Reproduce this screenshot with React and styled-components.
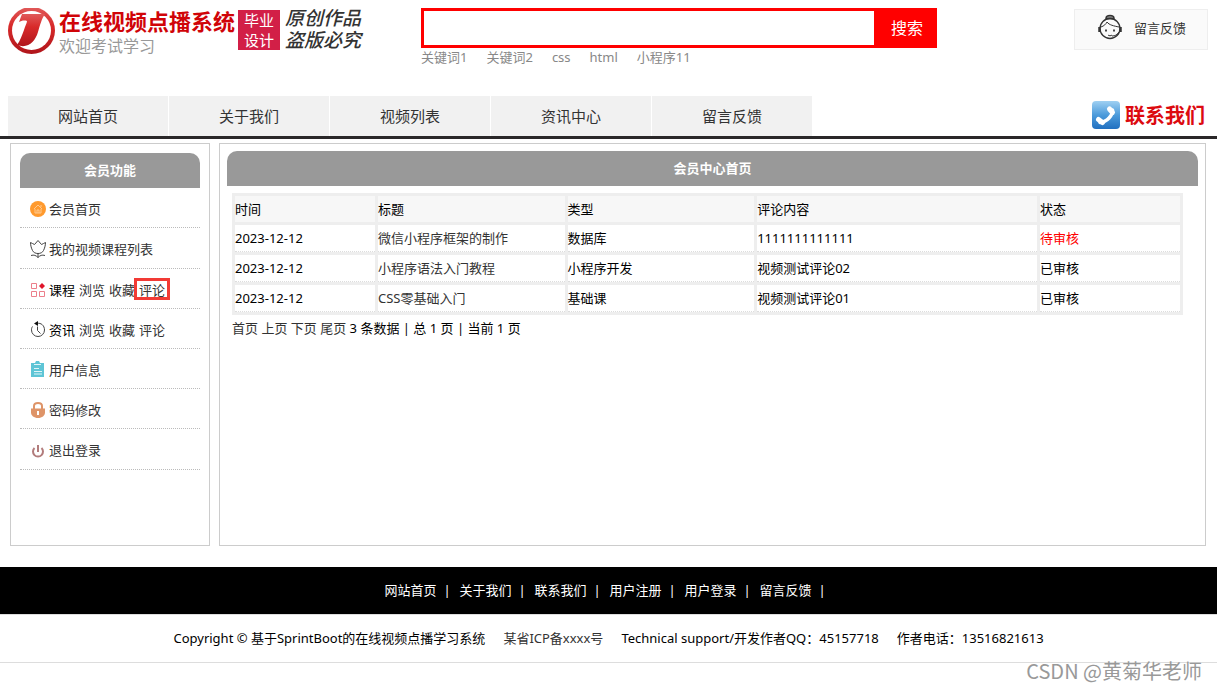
import React from "react";
import styled, { createGlobalStyle, css } from "styled-components";

const GlobalStyle = createGlobalStyle`
  *, *::before, *::after { box-sizing: border-box; }
  body {
    margin: 0;
    background: #fff;
    color: #000;
    font: 13px/18px "Noto Sans", "Noto Sans CJK SC", sans-serif;
  }
  a { color: #333; text-decoration: none; }
  ul { margin: 0; padding: 0; list-style: none; }
  h1, h2, p { margin: 0; }
  svg { display: block; flex: none; }
`;

const Page = styled.div`
  position: relative;
  min-height: 100vh;
`;

/* ---------- header ---------- */

const Header = styled.header`
  display: grid;
  grid-template-columns: 413px minmax(0, 516px) 1fr;
  align-items: start;
  min-height: 96px;
  padding: 8px 9px 0 8px;
`;

const Brand = styled.a`
  display: flex;
  align-items: flex-start;
`;

const BrandText = styled.div`
  margin-left: 3px;
  width: 176px;
  white-space: nowrap;
`;

const BrandTitle = styled.h1`
  color: #d00408;
  font-size: 22px;
  line-height: 26px;
  font-weight: 700;
`;

const BrandSubtitle = styled.p`
  color: #999;
  font-size: 16px;
  line-height: 24px;
`;

const Stamp = styled.span`
  width: 42px;
  margin: 2px 0 0 3px;
  padding: 0 6px;
  background: #d21f47;
  color: #fff;
  font-size: 15px;
  line-height: 20px;
`;

const Motto = styled.span`
  width: 80px;
  margin-left: 5px;
  color: #333;
  font-family: "Liberation Sans", "Noto Sans CJK SC", sans-serif;
  font-size: 19px;
  line-height: 22px;
  font-style: italic;
  font-weight: 500;
`;

const SearchBox = styled.form`
  display: flex;
  height: 40px;
`;

const SearchInput = styled.input`
  flex: 1;
  min-width: 0;
  padding: 0 8px;
  border: 3px solid #f00;
  background: #fff;
  font: inherit;
  outline: none;
`;

const SearchButton = styled.button`
  width: 60px;
  padding: 0;
  border: 0;
  background: #f00;
  color: #fff;
  font: inherit;
  font-size: 16px;
`;

const Keywords = styled.div`
  display: flex;
  gap: 19px;

  a { color: #888; }
`;

const FeedbackLink = styled.a`
  display: flex;
  align-items: center;
  justify-self: end;
  gap: 12px;
  width: 134px;
  height: 41px;
  margin-top: 1px;
  padding: 0 0 3px 23px;
  border: 1px solid #eee;
  background: #fafafa;
`;

/* ---------- navigation ---------- */

const Nav = styled.nav`
  display: flex;
  justify-content: space-between;
  padding: 0 12px 0 8px;
  border-bottom: 3px solid #2a2829;
`;

const NavList = styled.ul`
  display: flex;
  gap: 1px;
`;

const NavLink = styled.a`
  display: block;
  width: 160px;
  background: #f1f1f1;
  font-size: 15px;
  line-height: 40px;
  text-align: center;
`;

const ContactLink = styled.a`
  display: flex;
  align-items: center;
  gap: 4px;
  color: #dc0a0f;
  font-size: 20px;
  font-weight: 700;
`;

/* ---------- content ---------- */

const Content = styled.div`
  display: grid;
  grid-template-columns: 200px minmax(0, 1fr);
  gap: 9px;
  min-height: 403px;
  margin: 4px 11px 21px 10px;
`;

const Panel = styled.section`
  padding: ${(p) => p.$pad};
  border: 1px solid #ccc;
`;

const PanelTitle = styled.h2`
  border-radius: 10px 10px 0 0;
  background: #999;
  color: #fff;
  font-size: 13px;
  line-height: 35px;
  font-weight: 700;
  text-align: center;
`;

const MenuItem = styled.li`
  display: flex;
  align-items: center;
  gap: 3px;
  padding: 11px 0 9px 10px;
  border-bottom: 1px dotted #bbb;
`;

const MenuLinks = styled.div`
  display: flex;
  gap: 4px;
`;

const MenuLink = styled.a`
  position: relative;

  ${(p) =>
    p.$marked &&
    css`
      &::after {
        content: "";
        position: absolute;
        inset: -3px -5px -1px;
        border: 3px solid #f23a35;
      }
    `}
`;

const TableWrap = styled.div`
  padding: 7px 15px 0 5px;
`;

const Table = styled.table`
  width: 100%;
  table-layout: fixed;
  border-collapse: separate;
  border-spacing: 3px;
  background: #eee;

  th {
    height: 26px;
    padding: 0;
    background: #f7f7f7;
    font-weight: 400;
    text-align: left;
  }

  td {
    height: 27px;
    padding: 0;
    border-bottom: 1px dotted #ddd;
    background: #fff;
  }
`;

const Status = styled.span`
  color: ${(p) => (p.$pending ? "#f00" : "#000")};
`;

const Pager = styled.p`
  margin-top: 4px;
`;

/* ---------- footer ---------- */

const FooterNav = styled.nav`
  display: flex;
  justify-content: center;
  padding-left: 2px;
  background: #000;
  color: #fff;
  line-height: 47px;

  a { color: #fff; }
`;

const Divider = styled.span`
  width: 7px;
  margin: 0 9px 0 7px;
  text-align: center;
`;

const Copyright = styled.div`
  display: flex;
  justify-content: center;
  gap: 18px;
  border: solid #ddd;
  border-width: 1px 0;
  line-height: 47px;
`;

const Watermark = styled.span`
  position: absolute;
  right: 15px;
  top: 659px;
  color: #999;
  font-family: "Noto Sans CJK SC", sans-serif;
  font-size: 20px;
  line-height: 24px;
`;

/* ---------- drawings ---------- */

const LogoMark = () => (
  <svg width="48" height="48" viewBox="0 0 48 48" aria-hidden="true">
    <defs>
      <linearGradient id="ring" x1="0" y1="0" x2="0" y2="1">
        <stop offset="0" stopColor="#e05a5a" />
        <stop offset="0.4" stopColor="#d82a2a" />
        <stop offset="1" stopColor="#b0151b" />
      </linearGradient>
    </defs>
    <circle cx="23.5" cy="22.500" r="23.500" fill="url(#ring)" />
    <circle cx="23.5" cy="22.500" r="19.500" fill="#fff" />
    <path d="M14 6H37C34 10 32 17 30 24C27 34 20 41 9 37C12 33 14 27 16 22C17 18 19 15 19 13C16 12 13 13 11 14Z" fill="url(#ring)" />
  </svg>
);

const AgentIcon = () => (
  <svg width="24" height="28" viewBox="0 0 24 28" fill="none" stroke="#333" aria-hidden="true">
    <path d="M8 4.500c0-4 8-4 8 0z" fill="#999" strokeWidth="1.500" />
    <circle cx="12" cy="14.500" r="10" strokeWidth="1.300" />
    <path d="M3 13c3-1 5-3 6-5 2 3 7 4 12 5" />
    <path d="M1.500 13v5M22.500 13v5" strokeWidth="2.500" />
    <path d="M21 18c-2 3-4 4-7 4" />
    <path d="M8 15.500v2M16 15.500v2" strokeWidth="1.800" />
    <path d="M10 21c1 1 3 1 4 0" />
  </svg>
);

const PhoneIcon = () => (
  <svg width="30" height="30" viewBox="0 0 30 30" aria-hidden="true">
    <defs>
      <linearGradient id="phone" x1="0" y1="0" x2="0" y2="1">
        <stop offset="0" stopColor="#9fd0f2" />
        <stop offset="0.5" stopColor="#4c9bdb" />
        <stop offset="1" stopColor="#2270c0" />
      </linearGradient>
    </defs>
    <rect x="1" y="0" width="28" height="28" rx="4" fill="url(#phone)" />
    <g fill="none" stroke="#fff" strokeLinecap="round">
      <path d="M21.500 9C22 14 16 21 9 21.500" strokeWidth="3.500" />
      <path d="M18.500 8l3 3.500M7.500 18.500l4 3" strokeWidth="5" />
    </g>
  </svg>
);

const HomeIcon = () => (
  <svg width="16" height="19" viewBox="0 -1 16 19" fill="none" aria-hidden="true">
    <circle cx="8" cy="9" r="8" fill="#ff9a2e" />
    <path d="M4 9l4-4 4 4M5 9v4h6V9M7 13v-3h2v3M11 5v2" stroke="#ffc98e" />
  </svg>
);

const TulipIcon = () => (
  <svg width="16" height="20" viewBox="0 -1 16 20" fill="none" stroke="#444" aria-hidden="true">
    <path d="M0.500 2.500c1 1 3 1 4 2L8 0.500l3.500 4c1-1 3-1 4-2 0 3-1 6-2 8-1 2-3 3-5.500 3s-4.500-1-5.500-3c-1-2-2-5-2-8z" />
    <path d="M8 13.500v4M1 15.500c3-1 5 0 7 2 2-2 4-3 7-2" />
  </svg>
);

const GridIcon = () => (
  <svg width="16" height="19" viewBox="0 -1 16 19" fill="none" stroke="#ec7f8b" aria-hidden="true">
    <path d="M1.500 2.500h5v5h-5zM1.500 10.500h5v5h-5zM9.500 10.500h5v5h-5z" />
    <path d="M12 2l3 3-3 3-3-3z" fill="#e0142a" stroke="none" />
  </svg>
);

const ClockIcon = () => (
  <svg width="16" height="19" viewBox="0 -1 16 19" fill="none" stroke="#444" aria-hidden="true">
    <path d="M7 2.500c4-1 7.500 2 7.500 6.500a6.500 6.500 0 0 1-13 0c0-1 0-2 1-3.500" />
    <path d="M7.500 5.500v4l3 3" />
    <path d="M4 2.500l4-2.500v5z" fill="#111" stroke="none" />
  </svg>
);

const ClipboardIcon = () => (
  <svg width="16" height="19" viewBox="0 -1 16 19" aria-hidden="true">
    <path d="M1 2h4l1-2h3l1 2h4v14H1z" fill="#5ec5d6" />
    <path d="M4 3.500h7M4 7.500h5M4 10.500h8M4 13h8" stroke="#dff5f8" />
  </svg>
);

const LockIcon = () => (
  <svg width="16" height="19" viewBox="0 -1 16 19" fill="none" aria-hidden="true">
    <path d="M4 8V5c0-4 8-4 8 0v3" stroke="#de9468" strokeWidth="2" />
    <path d="M1 7.500h14v4c0 3-3 5.500-7 5.500s-7-2.500-7-5.500z" fill="#de9468" />
    <path d="M8 10v4" stroke="#fff" strokeWidth="2" />
  </svg>
);

const PowerIcon = () => (
  <svg width="16" height="20" viewBox="0 -1 16 20" fill="none" stroke="#b27c7c" strokeWidth="2" aria-hidden="true">
    <path d="M4.500 7a5 5 0 1 0 7 0M8 4V11" />
  </svg>
);

/* ---------- data ---------- */

const keywords = ["关键词1", "关键词2", "css", "html", "小程序11"];
const navItems = ["网站首页", "关于我们", "视频列表", "资讯中心", "留言反馈"];
const footerItems = ["网站首页", "关于我们", "联系我们", "用户注册", "用户登录", "留言反馈"];

const menu = [
  { icon: HomeIcon, links: ["会员首页"] },
  { icon: TulipIcon, links: ["我的视频课程列表"] },
  { icon: GridIcon, label: "课程", links: ["浏览", "收藏", "评论"], marked: "评论" },
  { icon: ClockIcon, label: "资讯", links: ["浏览", "收藏", "评论"] },
  { icon: ClipboardIcon, links: ["用户信息"] },
  { icon: LockIcon, links: ["密码修改"] },
  { icon: PowerIcon, links: ["退出登录"] },
];

const columns = [
  ["时间", "15%"],
  ["标题", "20%"],
  ["类型", "20%"],
  ["评论内容", "30%"],
  ["状态", "15%"],
];

const comments = [
  ["2023-12-12", "微信小程序框架的制作", "数据库", "1111111111111", "待审核"],
  ["2023-12-12", "小程序语法入门教程", "小程序开发", "视频测试评论02", "已审核"],
  ["2023-12-12", "CSS零基础入门", "基础课", "视频测试评论01", "已审核"],
];

export default function App() {
  return (
    <Page lang="zh-CN">
      <GlobalStyle />
      <Header>
        <Brand href="#">
          <LogoMark />
          <BrandText>
            <BrandTitle>在线视频点播系统</BrandTitle>
            <BrandSubtitle>欢迎考试学习</BrandSubtitle>
          </BrandText>
          <Stamp>毕业<br />设计</Stamp>
          <Motto>原创作品<br />盗版必究</Motto>
        </Brand>
        <div>
          <SearchBox onSubmit={(e) => e.preventDefault()}>
            <SearchInput type="text" aria-label="搜索" />
            <SearchButton type="submit">搜索</SearchButton>
          </SearchBox>
          <Keywords>
            {keywords.map((k) => <a href="#" key={k}>{k}</a>)}
          </Keywords>
        </div>
        <FeedbackLink href="#">
          <AgentIcon />
          留言反馈
        </FeedbackLink>
      </Header>

      <Nav>
        <NavList>
          {navItems.map((n) => (
            <li key={n}><NavLink href="#">{n}</NavLink></li>
          ))}
        </NavList>
        <ContactLink href="#">
          <PhoneIcon />
          联系我们
        </ContactLink>
      </Nav>

      <Content>
        <Panel $pad="9px">
          <PanelTitle>会员功能</PanelTitle>
          <ul>
            {menu.map(({ icon: Icon, label, links, marked }) => (
              <MenuItem key={label || links[0]}>
                <Icon />
                <MenuLinks>
                  {label && <span>{label}</span>}
                  {links.map((l) => (
                    <MenuLink href="#" key={l} $marked={l === marked}>{l}</MenuLink>
                  ))}
                </MenuLinks>
              </MenuItem>
            ))}
          </ul>
        </Panel>

        <Panel $pad="7px">
          <PanelTitle>会员中心首页</PanelTitle>
          <TableWrap>
            <Table>
              <colgroup>
                {columns.map(([name, width]) => <col key={name} width={width} />)}
              </colgroup>
              <thead>
                <tr>
                  {columns.map(([name]) => <th scope="col" key={name}>{name}</th>)}
                </tr>
              </thead>
              <tbody>
                {comments.map(([date, title, type, text, status]) => (
                  <tr key={title}>
                    <td>{date}</td>
                    <td><a href="#">{title}</a></td>
                    <td>{type}</td>
                    <td>{text}</td>
                    <td><Status $pending={status === "待审核"}>{status}</Status></td>
                  </tr>
                ))}
              </tbody>
            </Table>
            <Pager>
              <a href="#">首页</a> <a href="#">上页</a> <a href="#">下页</a> <a href="#">尾页</a> 3 条数据 | 总 1 页 | 当前 1 页
            </Pager>
          </TableWrap>
        </Panel>
      </Content>

      <footer>
        <FooterNav>
          {footerItems.map((f) => (
            <React.Fragment key={f}>
              <a href="#">{f}</a>
              <Divider>|</Divider>
            </React.Fragment>
          ))}
        </FooterNav>
        <Copyright>
          <span>Copyright © 基于SprintBoot的在线视频点播学习系统</span>
          <a href="#">某省ICP备xxxx号</a>
          <span>Technical support/开发作者QQ：45157718</span>
          <span>作者电话：13516821613</span>
        </Copyright>
      </footer>
      <Watermark>CSDN @黄菊华老师</Watermark>
    </Page>
  );
}
